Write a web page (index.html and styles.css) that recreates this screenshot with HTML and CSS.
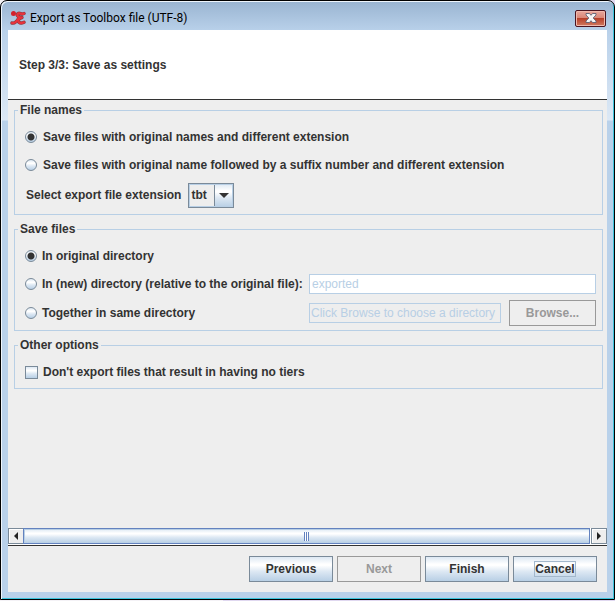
FILE: index.html
```html
<!DOCTYPE html>
<html lang="en">
<head>
<meta charset="utf-8">
<title>Export as Toolbox file (UTF-8)</title>
<link rel="stylesheet" href="styles.css">
</head>
<body>
<main class="window">
  <header class="titlebar">
    <svg class="app-icon" viewBox="0 0 16 16" aria-hidden="true">
      <g fill="none" stroke="#8d3a42" stroke-width="3.400" stroke-linecap="round" stroke-linejoin="round">
        <path d="M14 3.500C12 5 10 2.500 8 3.500C6.500 5 7.500 7.500 12 7.500C8.500 8.500 7.500 10.500 9 12.300C10.500 13.600 12.500 13 14 12.300"/>
        <path d="M2 13C4.500 13.600 6.500 12 8.500 8.500"/>
      </g>
      <circle cx="3.500" cy="3.500" r="2.500" fill="#d3202c"/>
      <g fill="none" stroke="#e8323c" stroke-width="2.200" stroke-linecap="round" stroke-linejoin="round">
        <path d="M14 3.500C12 5 10 2.500 8 3.500C6.500 5 7.500 7.500 12 7.500C8.500 8.500 7.500 10.500 9 12.300C10.500 13.600 12.500 13 14 12.300"/>
        <path d="M2 13C4.500 13.600 6.500 12 8.500 8.500"/>
      </g>
    </svg>
    <h1 class="title">Export as Toolbox file (UTF-8)</h1>
    <button class="close" type="button" aria-label="Close">
      <svg viewBox="0 0 12 10" aria-hidden="true">
        <path d="M1 .5h3.500L6 2.300 7.500.5H11v1.500L8.200 5 11 8v1.500H7.500L6 7.700 4.500 9.500H1V8l2.800-3L1 2z" fill="#f5f5f5" stroke="#5d6074" stroke-width=".9"/>
      </svg>
    </button>
  </header>
  <form class="content">
    <div class="step"><h2>Step 3/3: Save as settings</h2></div>
    <div class="settings">
      <fieldset>
        <legend>File names</legend>
        <label class="row wide"><input type="radio" name="naming" checked>Save files with original names and different extension</label>
        <label class="row wide"><input type="radio" name="naming">Save files with original name followed by a suffix number and different extension</label>
        <div class="row extension">
          <label for="ext">Select export file extension</label>
          <span class="combo">
            <select id="ext"><option>tbt</option></select>
            <svg viewBox="0 0 10 5" aria-hidden="true"><path d="M0 0h10L5 5z" fill="#333"/></svg>
          </span>
        </div>
      </fieldset>
      <fieldset>
        <legend>Save files</legend>
        <label class="row"><input type="radio" name="place" checked>In original directory</label>
        <div class="row split">
          <label><input type="radio" name="place">In (new) directory (relative to the original file):</label>
          <input class="field" type="text" value="exported" aria-label="New directory" disabled>
        </div>
        <div class="row split tall">
          <label><input type="radio" name="place">Together in same directory</label>
          <input class="field" type="text" value="Click Browse to choose a directory" aria-label="Directory" disabled readonly>
          <button class="btn" type="button" disabled>Browse...</button>
        </div>
      </fieldset>
      <fieldset>
        <legend>Other options</legend>
        <label class="row"><input type="checkbox">Don't export files that result in having no tiers</label>
      </fieldset>
    </div>
    <div class="scrollbar">
      <button type="button" class="arrow" aria-label="Scroll left"><svg viewBox="0 0 4 8" aria-hidden="true"><path d="M4 0v8L0 4z" fill="#222"/></svg></button>
      <div class="thumb"><span class="grip"></span></div>
      <button type="button" class="arrow" aria-label="Scroll right"><svg viewBox="0 0 4 8" aria-hidden="true"><path d="M0 0v8l4-4z" fill="#222"/></svg></button>
    </div>
    <div class="actions">
      <button class="btn" type="button">Previous</button>
      <button class="btn" type="button" disabled>Next</button>
      <button class="btn" type="button">Finish</button>
      <button class="btn focused" type="button"><span>Cancel</span></button>
    </div>
  </form>
</main>
</body>
</html>
```
FILE: styles.css
```css
* { box-sizing: border-box; }

:root {
  --line: #b8cfe5;
  --edge: #7a8a99;
  --text: #333;
  --off: #999;
  --face: linear-gradient(#dde8f3 0%, #fff 30%, #fff 35%, #dde8f3 60%, #b8cfe5 100%);
}

body {
  margin: 0;
  height: 100vh;
  padding-bottom: 1px;
  background: linear-gradient(90deg, #f4f2f6 223px, #e0d8f0 223px);
  font: bold 12px/15px "Liberation Sans", Arial, sans-serif;
  color: var(--text);
}

button, input, select { font: inherit; color: inherit; margin: 0; }
h1, h2 { margin: 0; font: inherit; }

.window {
  min-height: 100%;
  display: flex;
  flex-direction: column;
  padding: 0 7px 7px;
  border: 1px solid #000;
  border-radius: 7px 7px 0 0;
  background: linear-gradient(#99b4d1, #b9d1ea 30px, #dce8f5 119px, #b9d1ea 120px);
  box-shadow: inset 1px 1px #eef5fc, inset -1px -1px #3cc4dc;
}

.titlebar {
  display: flex;
  align-items: center;
  height: 29px;
  padding: 5px 1px 0 2px;
}
.app-icon { width: 16px; height: 16px; }
.title {
  flex: 1;
  margin-left: 4px;
  font: 12px/16px Roboto, "Segoe UI", sans-serif;
  color: #000;
}
.close {
  display: grid;
  place-items: center;
  width: 31px;
  height: 17px;
  padding: 0;
  border: 1px solid #4a1420;
  border-radius: 2px;
  background: linear-gradient(#e8a79c, #d98576 48%, #b8402a 50%, #d07a60);
  box-shadow: inset 0 0 0 1px #f0b8ac;
}
.close svg { width: 12px; height: 10px; }

.content {
  flex: 1;
  display: flex;
  flex-direction: column;
  background: #eee;
}

.step {
  display: flex;
  align-items: center;
  height: 70px;
  padding: 1px 11px 0;
  border-bottom: 1px solid #333;
  background: #fff;
}

.settings {
  flex: 1;
  display: flex;
  flex-direction: column;
  gap: 7px;
  padding: 3px 4px 0 6px;
}

fieldset {
  min-width: 0;
  margin: 0;
  padding: 5px 6px 2px 10px;
  border: 1px solid var(--line);
}
legend { margin-left: -7px; padding: 0 2px; }

.row { display: flex; align-items: center; height: 28px; gap: 5px; }
.row label { display: flex; align-items: center; gap: 5px; }
.wide { gap: 6px; }
.tall { height: 30px; }

.row.extension {
  height: 25px;
  margin: 4px 0;
  padding-left: 1px;
  gap: 7px;
}

input[type="radio"], input[type="checkbox"] {
  appearance: none;
  flex: none;
  width: 12px;
  height: 12px;
  border: 1px solid var(--edge);
  background: var(--face);
}
input[type="radio"] { border-radius: 50%; }
input[type="radio"]:checked {
  background: radial-gradient(circle, #333 3px, transparent 4px), var(--face);
}
input[type="checkbox"] { width: 13px; height: 13px; }

.combo { position: relative; display: flex; }
.combo select {
  appearance: none;
  width: 46px;
  height: 25px;
  padding: 0 0 0 2px;
  border: 1px solid var(--edge);
  border-radius: 0;
  background:
    linear-gradient(var(--edge), var(--edge)) 25px 0 / 1px 100% no-repeat,
    var(--face) right / 19px 100% no-repeat,
    #eee;
  box-shadow: inset 0 0 0 1px var(--line);
}
.combo svg { position: absolute; right: 5px; top: 10px; width: 10px; height: 5px; pointer-events: none; }

.split label { flex: 0 0 279px; }
.field {
  flex: 1;
  min-width: 0;
  height: 20px;
  padding: 0 2px;
  border: 1px solid var(--line);
  background: #fff;
  color: var(--line);
  font-weight: normal;
}
.field[readonly] { padding: 0 1px; background: #eee; }

.btn {
  width: 84px;
  height: 26px;
  padding: 0;
  border: 1px solid var(--edge);
  background: var(--face);
}
.btn:disabled { border-color: var(--off); background: #eee; color: var(--off); }
.split .btn { width: 87px; margin-left: 3px; }
.focused span { outline: 1px solid #a3b8cc; }

.scrollbar {
  display: flex;
  height: 18px;
  padding-bottom: 1px;
  border-bottom: 1px solid #333;
  background: #fff;
}
.arrow {
  display: grid;
  place-items: center;
  width: 16px;
  padding: 0;
  border: 1px solid var(--edge);
  background: #eee;
  box-shadow: inset 1px 1px #fff;
}
.arrow svg { width: 4px; height: 8px; }
.thumb {
  flex: 1;
  display: grid;
  place-items: center;
  margin: 0 1px 0 -1px;
  border: 1px solid #6382bf;
  background: var(--face);
  box-shadow: inset 1px 1px var(--line);
}
.grip {
  width: 5px;
  height: 9px;
  background: repeating-linear-gradient(90deg, #6382bf 0 1px, #fff 1px 2px);
}

.actions {
  display: flex;
  justify-content: flex-end;
  gap: 4px;
  padding: 10px;
}
```
